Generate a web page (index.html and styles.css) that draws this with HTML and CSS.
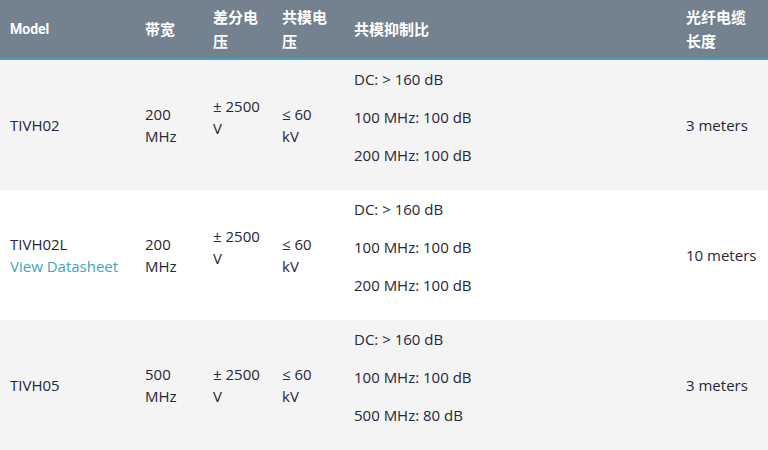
FILE: index.html
```html
<!DOCTYPE html>
<html lang="zh">
<head>
<meta charset="utf-8">
<title>TIVH</title>
<link rel="stylesheet" href="styles.css">
</head>
<body>
<table class="spec">
  <colgroup>
    <col class="c-model"><col class="c-bw"><col class="c-diff"><col class="c-cm"><col class="c-cmrr"><col class="c-len">
  </colgroup>
  <thead>
    <tr>
      <th class="latin">Model</th>
      <th>带宽</th>
      <th>差分电压</th>
      <th class="narrow">共模电压</th>
      <th>共模抑制比</th>
      <th>光纤电缆长度</th>
    </tr>
  </thead>
  <tbody>
    <tr class="odd">
      <td>TIVH02</td>
      <td>200 MHz</td>
      <td><p>± 2500 V</p></td>
      <td class="narrow">≤ 60 kV</td>
      <td><p>DC: &gt; 160 dB</p><p>100 MHz: 100 dB</p><p>200 MHz: 100 dB</p></td>
      <td>3 meters</td>
    </tr>
    <tr>
      <td>TIVH02L<br><a href="#" class="link">View Datasheet</a></td>
      <td>200 MHz</td>
      <td><p>± 2500 V</p></td>
      <td class="narrow">≤ 60 kV</td>
      <td><p>DC: &gt; 160 dB</p><p>100 MHz: 100 dB</p><p>200 MHz: 100 dB</p></td>
      <td>10 meters</td>
    </tr>
    <tr class="odd">
      <td>TIVH05</td>
      <td>500 MHz</td>
      <td>± 2500 V</td>
      <td class="narrow">≤ 60 kV</td>
      <td><p>DC: &gt; 160 dB</p><p>100 MHz: 100 dB</p><p>500 MHz: 80 dB</p></td>
      <td>3 meters</td>
    </tr>
  </tbody>
</table>
</body>
</html>
```
FILE: styles.css
```css
html, body {
  margin: 0;
  padding: 0;
  background: #ffffff;
}
body {
  font-family: "Open Sans", "Noto Sans CJK SC", sans-serif;
  font-size: 15px;
  color: #272736;
}
.spec {
  width: 768px;
  border-collapse: collapse;
  table-layout: fixed;
}
.c-model { width: 135px; }
.c-bw { width: 68px; }
.c-diff { width: 69px; }
.c-cm { width: 72px; }
.c-cmrr { width: 332px; }
.c-len { width: 92px; }

.spec th {
  background: #74818e;
  color: #ffffff;
  font-family: "Noto Sans CJK SC", sans-serif;
  font-weight: 700;
  font-size: 15px;
  line-height: 24px;
  text-align: left;
  padding: 5px 10px;
  height: 48px;
  border-bottom: 2px solid #4b9db6;
  vertical-align: middle;
}
.spec th.latin {
  font-family: "Roboto", "Liberation Sans", sans-serif;
  font-size: 14px;
}
.spec td {
  padding: 8px 10px;
  height: 114px;
  line-height: 22px;
  vertical-align: middle;
}
.spec .narrow {
  padding-right: 14px;
}
.spec tr.odd td {
  background: #f4f4f4;
}
.spec td p {
  margin: 0 0 16px;
}
.link {
  color: #3ea6c3;
  text-decoration: none;
}
```
